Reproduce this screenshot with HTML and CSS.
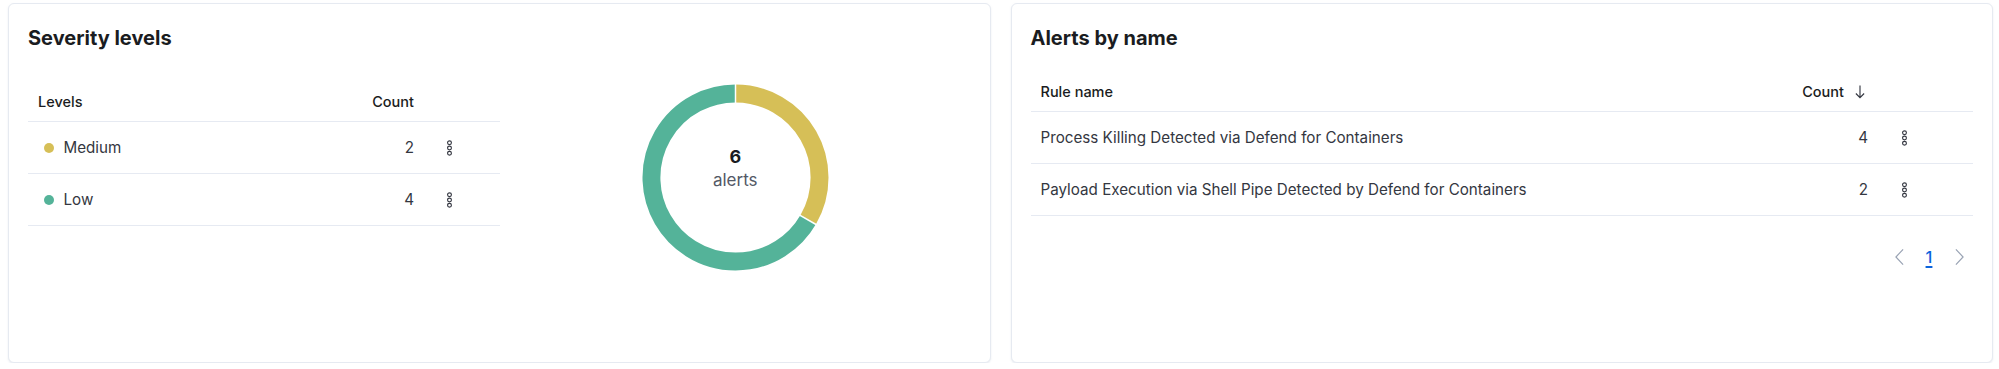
FILE: index.html
```html
<!DOCTYPE html>
<html lang="en">
<head>
<meta charset="utf-8">
<title>Alerts</title>
<link rel="stylesheet" href="styles.css">
</head>
<body>
<div class="grid">
  <section class="panel">
    <h2 class="title">Severity levels</h2>
    <div class="sev-body">
      <div class="table sev-table">
        <div class="row head">
          <div class="cell name">Levels</div>
          <div class="cell count">Count</div>
          <div class="cell act"></div>
        </div>
        <div class="row">
          <div class="cell name"><span class="dot medium"></span>Medium</div>
          <div class="cell count">2</div>
          <div class="cell act"><svg class="kebab" viewBox="0 0 8 18"><circle cx="4" cy="3" r="2.2"/><circle cx="4" cy="9" r="2.2"/><circle cx="4" cy="15" r="2.2"/></svg></div>
        </div>
        <div class="row">
          <div class="cell name"><span class="dot low"></span>Low</div>
          <div class="cell count">4</div>
          <div class="cell act"><svg class="kebab" viewBox="0 0 8 18"><circle cx="4" cy="3" r="2.2"/><circle cx="4" cy="9" r="2.2"/><circle cx="4" cy="15" r="2.2"/></svg></div>
        </div>
      </div>
      <div class="chart">
        <div class="donut">
          <svg class="ring" viewBox="0 0 188 188">
            <path d="M94 9.5 A84.5 84.5 0 0 1 167.18 136.25" stroke="#D6BF57" stroke-width="18" fill="none"/>
            <path d="M167.18 136.25 A84.5 84.5 0 1 1 94 9.5" stroke="#54B399" stroke-width="18" fill="none"/>
            <line x1="94" y1="0" x2="94" y2="20" stroke="#fff" stroke-width="1.5"/>
            <line x1="158.09" y1="131.5" x2="176.27" y2="142" stroke="#fff" stroke-width="1.5"/>
          </svg>
          <div class="label">
            <div class="num">6</div>
            <div class="unit">alerts</div>
          </div>
        </div>
      </div>
    </div>
  </section>
  <section class="panel">
    <h2 class="title">Alerts by name</h2>
    <div class="table rule-table">
      <div class="row head">
        <div class="cell name">Rule name</div>
        <div class="cell count">Count <svg class="sort" viewBox="0 0 16 18"><path d="M8 2v14M3.3 11.3 8 16l4.7-4.7" fill="none" stroke="#343741" stroke-width="1.3"/></svg></div>
        <div class="cell act"></div>
      </div>
      <div class="row">
        <div class="cell name">Process Killing Detected via Defend for Containers</div>
        <div class="cell count">4</div>
        <div class="cell act"><svg class="kebab" viewBox="0 0 8 18"><circle cx="4" cy="3" r="2.2"/><circle cx="4" cy="9" r="2.2"/><circle cx="4" cy="15" r="2.2"/></svg></div>
      </div>
      <div class="row">
        <div class="cell name">Payload Execution via Shell Pipe Detected by Defend for Containers</div>
        <div class="cell count">2</div>
        <div class="cell act"><svg class="kebab" viewBox="0 0 8 18"><circle cx="4" cy="3" r="2.2"/><circle cx="4" cy="9" r="2.2"/><circle cx="4" cy="15" r="2.2"/></svg></div>
      </div>
    </div>
    <nav class="pager">
      <span class="pbtn"><svg viewBox="0 0 12 20"><path d="M10 1.5 2 10l8 8.5" fill="none" stroke="#98a2b3" stroke-width="1.3"/></svg></span>
      <span class="pbtn page">1</span>
      <span class="pbtn"><svg viewBox="0 0 12 20"><path d="M2 1.5 10 10l-8 8.5" fill="none" stroke="#98a2b3" stroke-width="1.3"/></svg></span>
    </nav>
  </section>
</div>
</body>
</html>
```

FILE: styles.css
```css
* { box-sizing: border-box; }
html, body { margin: 0; background: #ffffff; }
body {
  padding: 3px 6px 0 8px;
  font-family: Inter, "Noto Sans", "Liberation Sans", sans-serif;
  color: #343741;
}
.grid {
  display: grid;
  grid-template-columns: 1fr 1fr;
  gap: 20px;
}
.panel {
  height: 360px;
  border: 1px solid #e6eaf1;
  border-radius: 6px;
  box-shadow: 0 1px 2px rgba(190, 198, 215, 0.35);
  padding: 19px;
  background: #fff;
}
.title {
  margin: 0;
  font-size: 20px;
  line-height: 30px;
  font-weight: 700;
  color: #1a1c21;
}
.sev-body {
  display: flex;
  align-items: flex-start;
  margin-top: 29px;
}
.table { display: flex; flex-direction: column; }
.sev-table { width: 472px; flex: none; }
.rule-table { margin-top: 19px; }
.row {
  display: flex;
  align-items: center;
  height: 52px;
  border-bottom: 1px solid #e6eaf2;
  font-size: 15.2px;
}
.row.head {
  height: 40px;
  font-size: 14.5px;
  font-weight: 500;
  color: #1a1c21;
}
.cell.name {
  flex: 1;
  padding-left: 10px;
  display: flex;
  align-items: center;
}
.sev-table .row:not(.head) .cell.name { padding-left: 15.5px; }
.cell.count {
  width: 120px;
  padding-right: 8px;
  text-align: right;
  display: flex;
  justify-content: flex-end;
  align-items: center;
}
.sev-table .cell.act { width: 78px; padding-left: 24px; }
.rule-table .cell.act { width: 97px; padding-left: 25px; }
.cell.act { display: flex; align-items: center; }
.dot {
  width: 10px;
  height: 10px;
  border-radius: 50%;
  margin-right: 10px;
  flex: none;
}
.dot.medium { background: #D6BF57; }
.dot.low { background: #54B399; }
.kebab {
  width: 7px;
  height: 18px;
  fill: none;
  stroke: #343741;
  stroke-width: 1.3;
}
.sort {
  width: 14px;
  height: 17px;
  margin-left: 9px;
  margin-right: 1px;
}
.chart {
  flex: 1;
  display: flex;
  justify-content: center;
  margin-top: 2px;
}
.donut {
  display: grid;
  width: 187px;
  height: 187px;
}
.ring, .label { grid-area: 1 / 1; }
.ring { width: 187px; height: 187px; }
.label {
  align-self: center;
  justify-self: center;
  text-align: center;
  margin-top: -17px;
}
.num {
  font-size: 18px;
  font-weight: 700;
  color: #1a1c21;
  line-height: 22px;
}
.unit {
  font-size: 17px;
  color: #535966;
  line-height: 24px;
}
.pager {
  display: flex;
  justify-content: flex-end;
  gap: 6px;
  margin-top: 27px;
  padding-right: 2px;
  height: 28px;
  align-items: center;
}
.pbtn {
  width: 24px;
  height: 28px;
  display: flex;
  align-items: center;
  justify-content: center;
}
.pbtn svg { width: 11px; height: 18px; }
.page {
  color: #0b64dd;
  font-size: 16.5px;
  font-weight: 500;
  text-decoration: underline;
  text-underline-offset: 3px;
  text-decoration-thickness: 2px;
}
```
